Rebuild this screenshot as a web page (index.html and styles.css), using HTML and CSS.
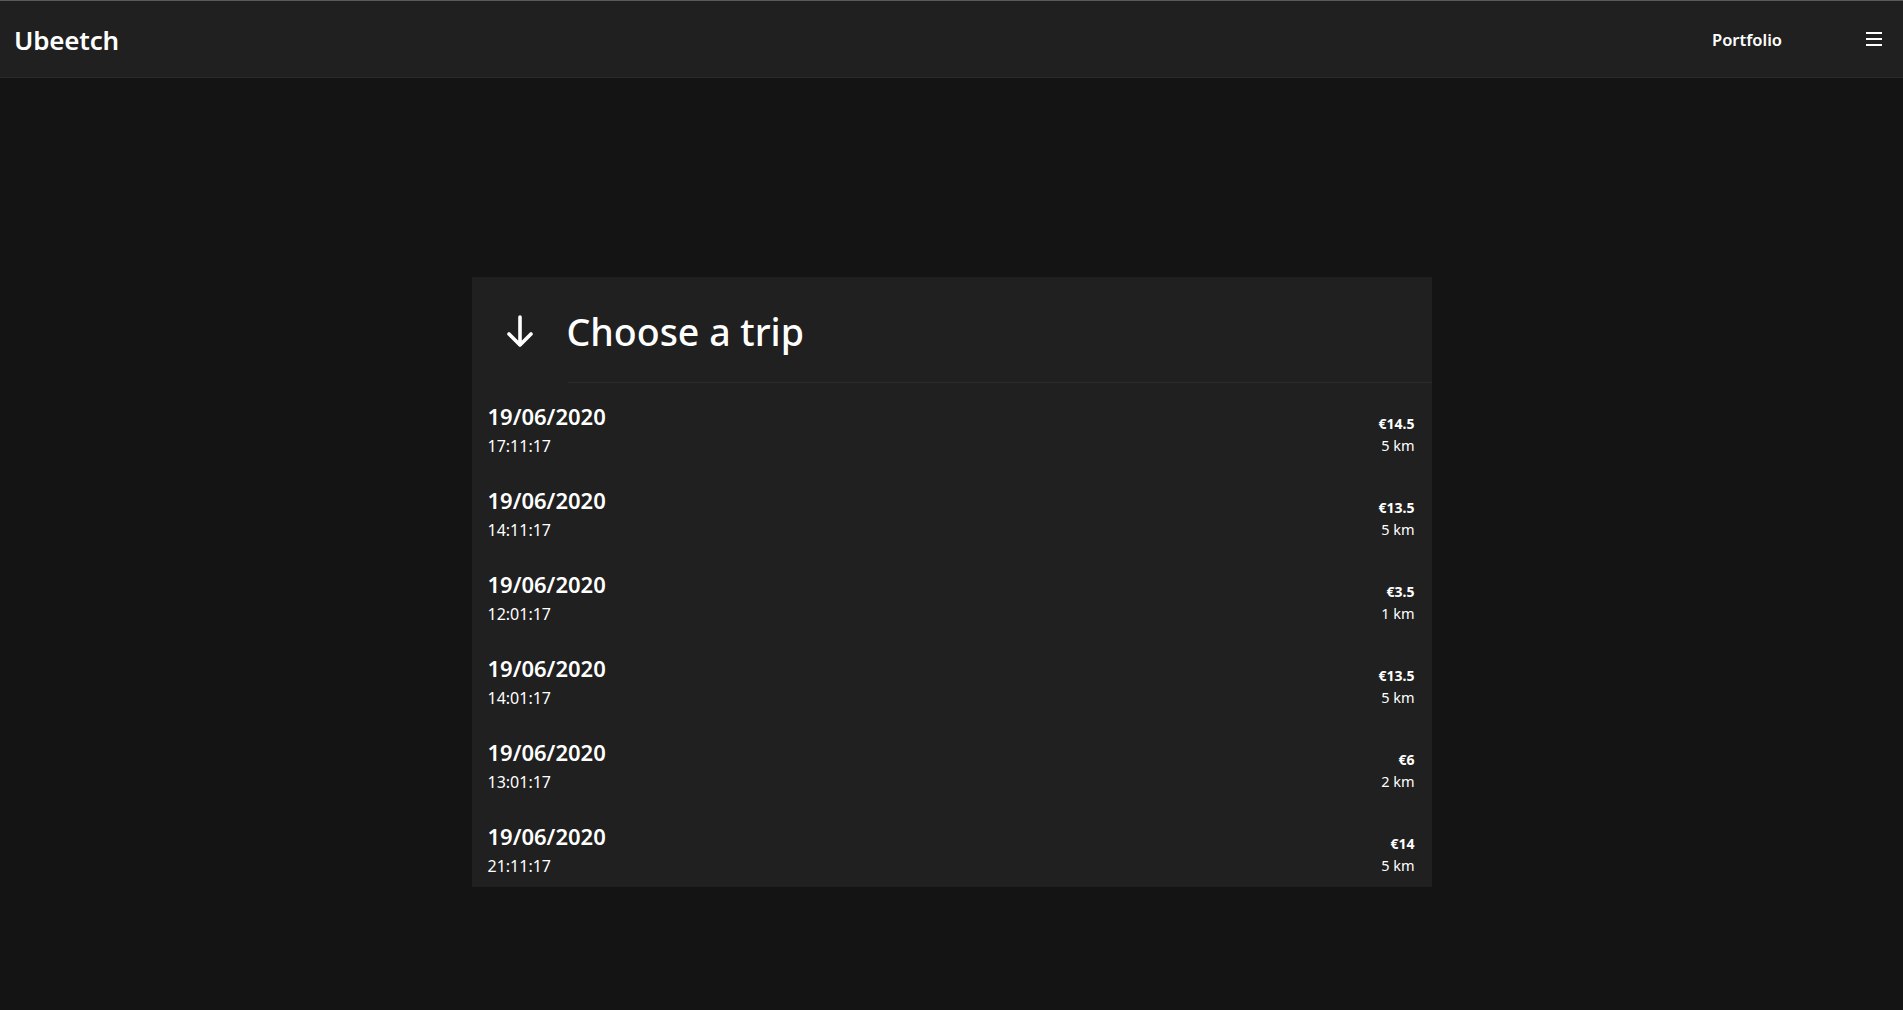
FILE: index.html
```html
<!DOCTYPE html>
<html lang="en">
<head>
<meta charset="utf-8">
<title>Ubeetch</title>
<link rel="stylesheet" href="styles.css">
</head>
<body>
<header class="topbar">
  <div class="brand">Ubeetch</div>
  <nav class="nav">
    <a class="nav-link" href="#">Portfolio</a>
    <button class="menu-btn" aria-label="Menu">
      <span></span><span></span><span></span>
    </button>
  </nav>
</header>
<main class="main">
  <section class="card">
    <div class="card-head">
      <svg class="arrow" width="28" height="34" viewBox="0 0 28 34" aria-hidden="true">
        <path d="M14 2 V30 M3 19 L14 30 L25 19" fill="none" stroke="#fff" stroke-width="3.6" stroke-linecap="round" stroke-linejoin="round"/>
      </svg>
      <h1 class="title">Choose a trip</h1>
    </div>
    <ul class="trips">
      <li class="trip"><div class="when"><div class="date">19/06/2020</div><div class="time">17:11:17</div></div><div class="meta"><div class="price">€14.5</div><div class="dist">5 km</div></div></li>
      <li class="trip"><div class="when"><div class="date">19/06/2020</div><div class="time">14:11:17</div></div><div class="meta"><div class="price">€13.5</div><div class="dist">5 km</div></div></li>
      <li class="trip"><div class="when"><div class="date">19/06/2020</div><div class="time">12:01:17</div></div><div class="meta"><div class="price">€3.5</div><div class="dist">1 km</div></div></li>
      <li class="trip"><div class="when"><div class="date">19/06/2020</div><div class="time">14:01:17</div></div><div class="meta"><div class="price">€13.5</div><div class="dist">5 km</div></div></li>
      <li class="trip"><div class="when"><div class="date">19/06/2020</div><div class="time">13:01:17</div></div><div class="meta"><div class="price">€6</div><div class="dist">2 km</div></div></li>
      <li class="trip"><div class="when"><div class="date">19/06/2020</div><div class="time">21:11:17</div></div><div class="meta"><div class="price">€14</div><div class="dist">5 km</div></div></li>
    </ul>
  </section>
</main>
</body>
</html>
```

FILE: styles.css
```css
* { box-sizing: border-box; }
html, body { margin: 0; padding: 0; }
body {
  background: #141414;
  color: #ffffff;
  font-family: "Noto Sans", "Open Sans", "Liberation Sans", sans-serif;
  min-height: 1010px;
}
.topbar {
  height: 78px;
  background: #202020;
  border-top: 1px solid #5a5a5a;
  border-bottom: 1px solid #2a2a2a;
  display: flex;
  align-items: center;
  justify-content: space-between;
  padding: 0 21px 0 14px;
}
.brand {
  font-size: 26px;
  font-weight: 600;
  letter-spacing: -0.2px;
  line-height: 1;
  margin-top: 2px;
}
.nav {
  display: flex;
  align-items: center;
  gap: 84px;
}
.nav-link {
  color: #fff;
  text-decoration: none;
  font-size: 16.5px;
  font-weight: 600;
}
.menu-btn {
  background: none;
  border: 0;
  padding: 0;
  width: 16px;
  display: flex;
  flex-direction: column;
  gap: 4px;
  cursor: pointer;
}
.menu-btn span {
  display: block;
  height: 2px;
  background: #fff;
}
.main {
  padding-top: 199px;
  display: flex;
  justify-content: center;
}
.card {
  width: 960px;
  background: #202020;
}
.card-head {
  height: 106px;
  display: flex;
  align-items: center;
  padding-left: 34px;
  position: relative;
}
.card-head::after {
  content: "";
  position: absolute;
  left: 96px;
  right: 0;
  bottom: 0;
  height: 1px;
  background: #2c2c2c;
}
.arrow { display: block; margin-top: 4px; }
.title {
  margin: 0 0 0 33px;
  font-size: 37.5px;
  font-weight: 500;
  line-height: 1;
  margin-top: 4px;
}
.trips {
  list-style: none;
  margin: 0;
  padding: 0;
}
.trip {
  height: 84px;
  display: flex;
  align-items: center;
  justify-content: space-between;
  padding: 10px 17px 0 16px;
}
.date {
  font-size: 22px;
  font-weight: 600;
  line-height: 28px;
}
.time {
  font-size: 16px;
  line-height: 24px;
  margin-top: 4px;
}
.meta {
  text-align: right;
  padding-top: 10px;
}
.price {
  font-size: 14px;
  font-weight: 700;
  line-height: 20px;
}
.dist {
  font-size: 14.5px;
  line-height: 22px;
}
```
